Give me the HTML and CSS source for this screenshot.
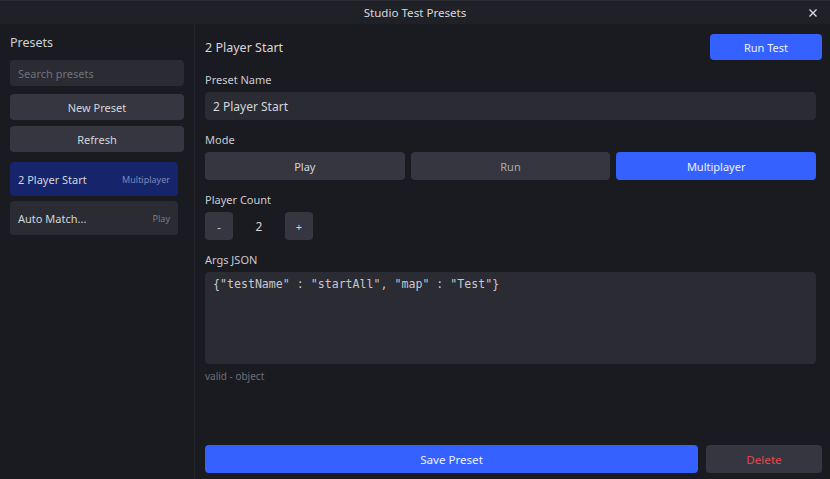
FILE: index.html
```html
<!DOCTYPE html>
<html lang="en">
<head>
    <meta charset="UTF-8">
    <meta name="viewport" content="width=device-width, initial-scale=1.0">
    <title>Studio Test Presets</title>
    <link rel="stylesheet" href="styles.css">
</head>
<body>
    <div class="titlebar">
        <span class="titlebar-text">Studio Test Presets</span>
        <button class="close-btn" aria-label="Close">
            <svg width="10" height="10" viewBox="0 0 10 10">
                <path d="M1.5 1.5 L8.5 8.5 M8.5 1.5 L1.5 8.5" stroke="#d8d9de" stroke-width="1.4" fill="none"/>
            </svg>
        </button>
    </div>

    <div class="window">
        <div class="sidebar">
            <h2 class="sidebar-title">Presets</h2>
            <input type="text" class="search" placeholder="Search presets">
            <button class="btn side-btn new-btn">New Preset</button>
            <button class="btn side-btn">Refresh</button>

            <div class="preset-list">
                <div class="preset-item selected">
                    <span class="preset-name">2 Player Start</span>
                    <span class="preset-mode">Multiplayer</span>
                </div>
                <div class="preset-item">
                    <span class="preset-name">Auto Match...</span>
                    <span class="preset-mode">Play</span>
                </div>
            </div>
        </div>

        <div class="main">
            <div class="header">
                <h1>2 Player Start</h1>
                <button class="btn primary run-btn">Run Test</button>
            </div>

            <div class="form">
                <div class="field">
                    <label>Preset Name</label>
                    <input type="text" class="text-input" value="2 Player Start">
                </div>

                <div class="field">
                    <label>Mode</label>
                    <div class="mode-group">
                        <button class="btn mode-btn">Play</button>
                        <button class="btn mode-btn dim">Run</button>
                        <button class="btn mode-btn primary">Multiplayer</button>
                    </div>
                </div>

                <div class="field">
                    <label>Player Count</label>
                    <div class="counter">
                        <button class="btn step-btn">-</button>
                        <span class="count">2</span>
                        <button class="btn step-btn">+</button>
                    </div>
                </div>

                <div class="field">
                    <label>Args JSON</label>
                    <textarea class="json-input" spellcheck="false">{"testName" : "startAll", "map" : "Test"}</textarea>
                    <div class="json-status">valid - object</div>
                </div>
            </div>

            <div class="footer">
                <button class="btn primary save-btn">Save Preset</button>
                <button class="btn delete-btn">Delete</button>
            </div>
        </div>
    </div>
</body>
</html>
```

FILE: styles.css
```css
* {
    box-sizing: border-box;
    margin: 0;
    padding: 0;
    font-family: 'Noto Sans', sans-serif;
}

body {
    background: #1a1b20;
    color: #d4d5db;
    width: 830px;
    height: 479px;
    display: flex;
    flex-direction: column;
    overflow: hidden;
}

.titlebar {
    height: 24px;
    background: #202127;
    border-top: 1px solid #2c2d34;
    display: flex;
    align-items: center;
    justify-content: center;
    position: relative;
}

.titlebar-text {
    font-size: 11.6px;
    color: #d8d9de;
}

.close-btn {
    position: absolute;
    right: 12px;
    top: 7px;
    background: none;
    border: none;
    display: flex;
}

.window {
    flex: 1;
    display: flex;
    min-height: 0;
}

/* left column */
.sidebar {
    width: 195px;
    border-right: 1px solid #24252b;
    padding: 9px 10px 0 10px;
    display: flex;
    flex-direction: column;
}

.sidebar-title {
    font-size: 12.5px;
    font-weight: 400;
    color: #cfd0d6;
    line-height: 20px;
    margin-bottom: 7px;
}

.search {
    height: 26px;
    background: #2a2b33;
    border: none;
    border-radius: 4px;
    padding: 0 8px;
    font-size: 11px;
    color: #d4d5db;
    outline: none;
}

.search::placeholder {
    color: #6f717b;
}

.btn {
    border: none;
    border-radius: 4px;
    background: #353640;
    color: #d4d5db;
    font-size: 11px;
    cursor: pointer;
}

.side-btn {
    height: 26px;
    margin-top: 6px;
}

.new-btn {
    margin-top: 8px;
}

.preset-list {
    margin-top: 10px;
    padding-right: 6px;
    display: flex;
    flex-direction: column;
    gap: 5px;
}

.preset-item {
    height: 34px;
    background: #2a2b33;
    border-radius: 4px;
    padding: 0 8px;
    display: flex;
    align-items: center;
    justify-content: space-between;
}

.preset-item.selected {
    background: #15246b;
}

.preset-name {
    font-size: 11px;
    color: #d4d5db;
}

.preset-mode {
    font-size: 9px;
    color: #7b7d87;
}

.selected .preset-mode {
    color: #7c88b8;
}

/* right column */
.main {
    flex: 1;
    padding: 10px 8px 6px 10px;
    display: flex;
    flex-direction: column;
}

.header {
    height: 26px;
    display: flex;
    align-items: center;
    justify-content: space-between;
}

h1 {
    font-size: 12.5px;
    font-weight: 400;
    color: #d6d7dc;
}

.primary {
    background: #3461ff;
    color: #eef1ff;
}

.run-btn {
    width: 112px;
    height: 26px;
}

.form {
    flex: 1;
    padding-right: 6px;
}

.field {
    margin-top: 12px;
}

label {
    display: block;
    font-size: 11px;
    line-height: 16px;
    color: #c9cad1;
    margin-bottom: 4px;
}

.text-input {
    width: 100%;
    height: 28px;
    background: #2a2b33;
    border: none;
    border-radius: 4px;
    padding: 0 8px;
    font-size: 12px;
    color: #d4d5db;
    outline: none;
}

.mode-group {
    display: grid;
    grid-template-columns: 1fr 1fr 1fr;
    gap: 6px;
}

.mode-btn {
    height: 28px;
}

.mode-btn.dim {
    color: #a9abb3;
}

.counter {
    display: flex;
    align-items: center;
}

.step-btn {
    width: 28px;
    height: 28px;
}

.count {
    width: 52px;
    text-align: center;
    font-size: 12px;
    color: #d4d5db;
}

.json-input {
    display: block;
    width: 100%;
    height: 92px;
    background: #2a2b33;
    border: none;
    border-radius: 4px;
    padding: 4px 8px;
    font-family: 'DejaVu Sans Mono', monospace;
    font-size: 11.6px;
    line-height: 16px;
    color: #c6c7ce;
    resize: none;
    outline: none;
}

.json-status {
    font-size: 10px;
    line-height: 16px;
    margin-top: 4px;
    color: #6c6e78;
}

.footer {
    display: flex;
    gap: 8px;
}

.save-btn {
    flex: 1;
    height: 28px;
    font-size: 11.6px;
}

.delete-btn {
    width: 116px;
    height: 28px;
    font-size: 11.6px;
    color: #e5484d;
}
```
